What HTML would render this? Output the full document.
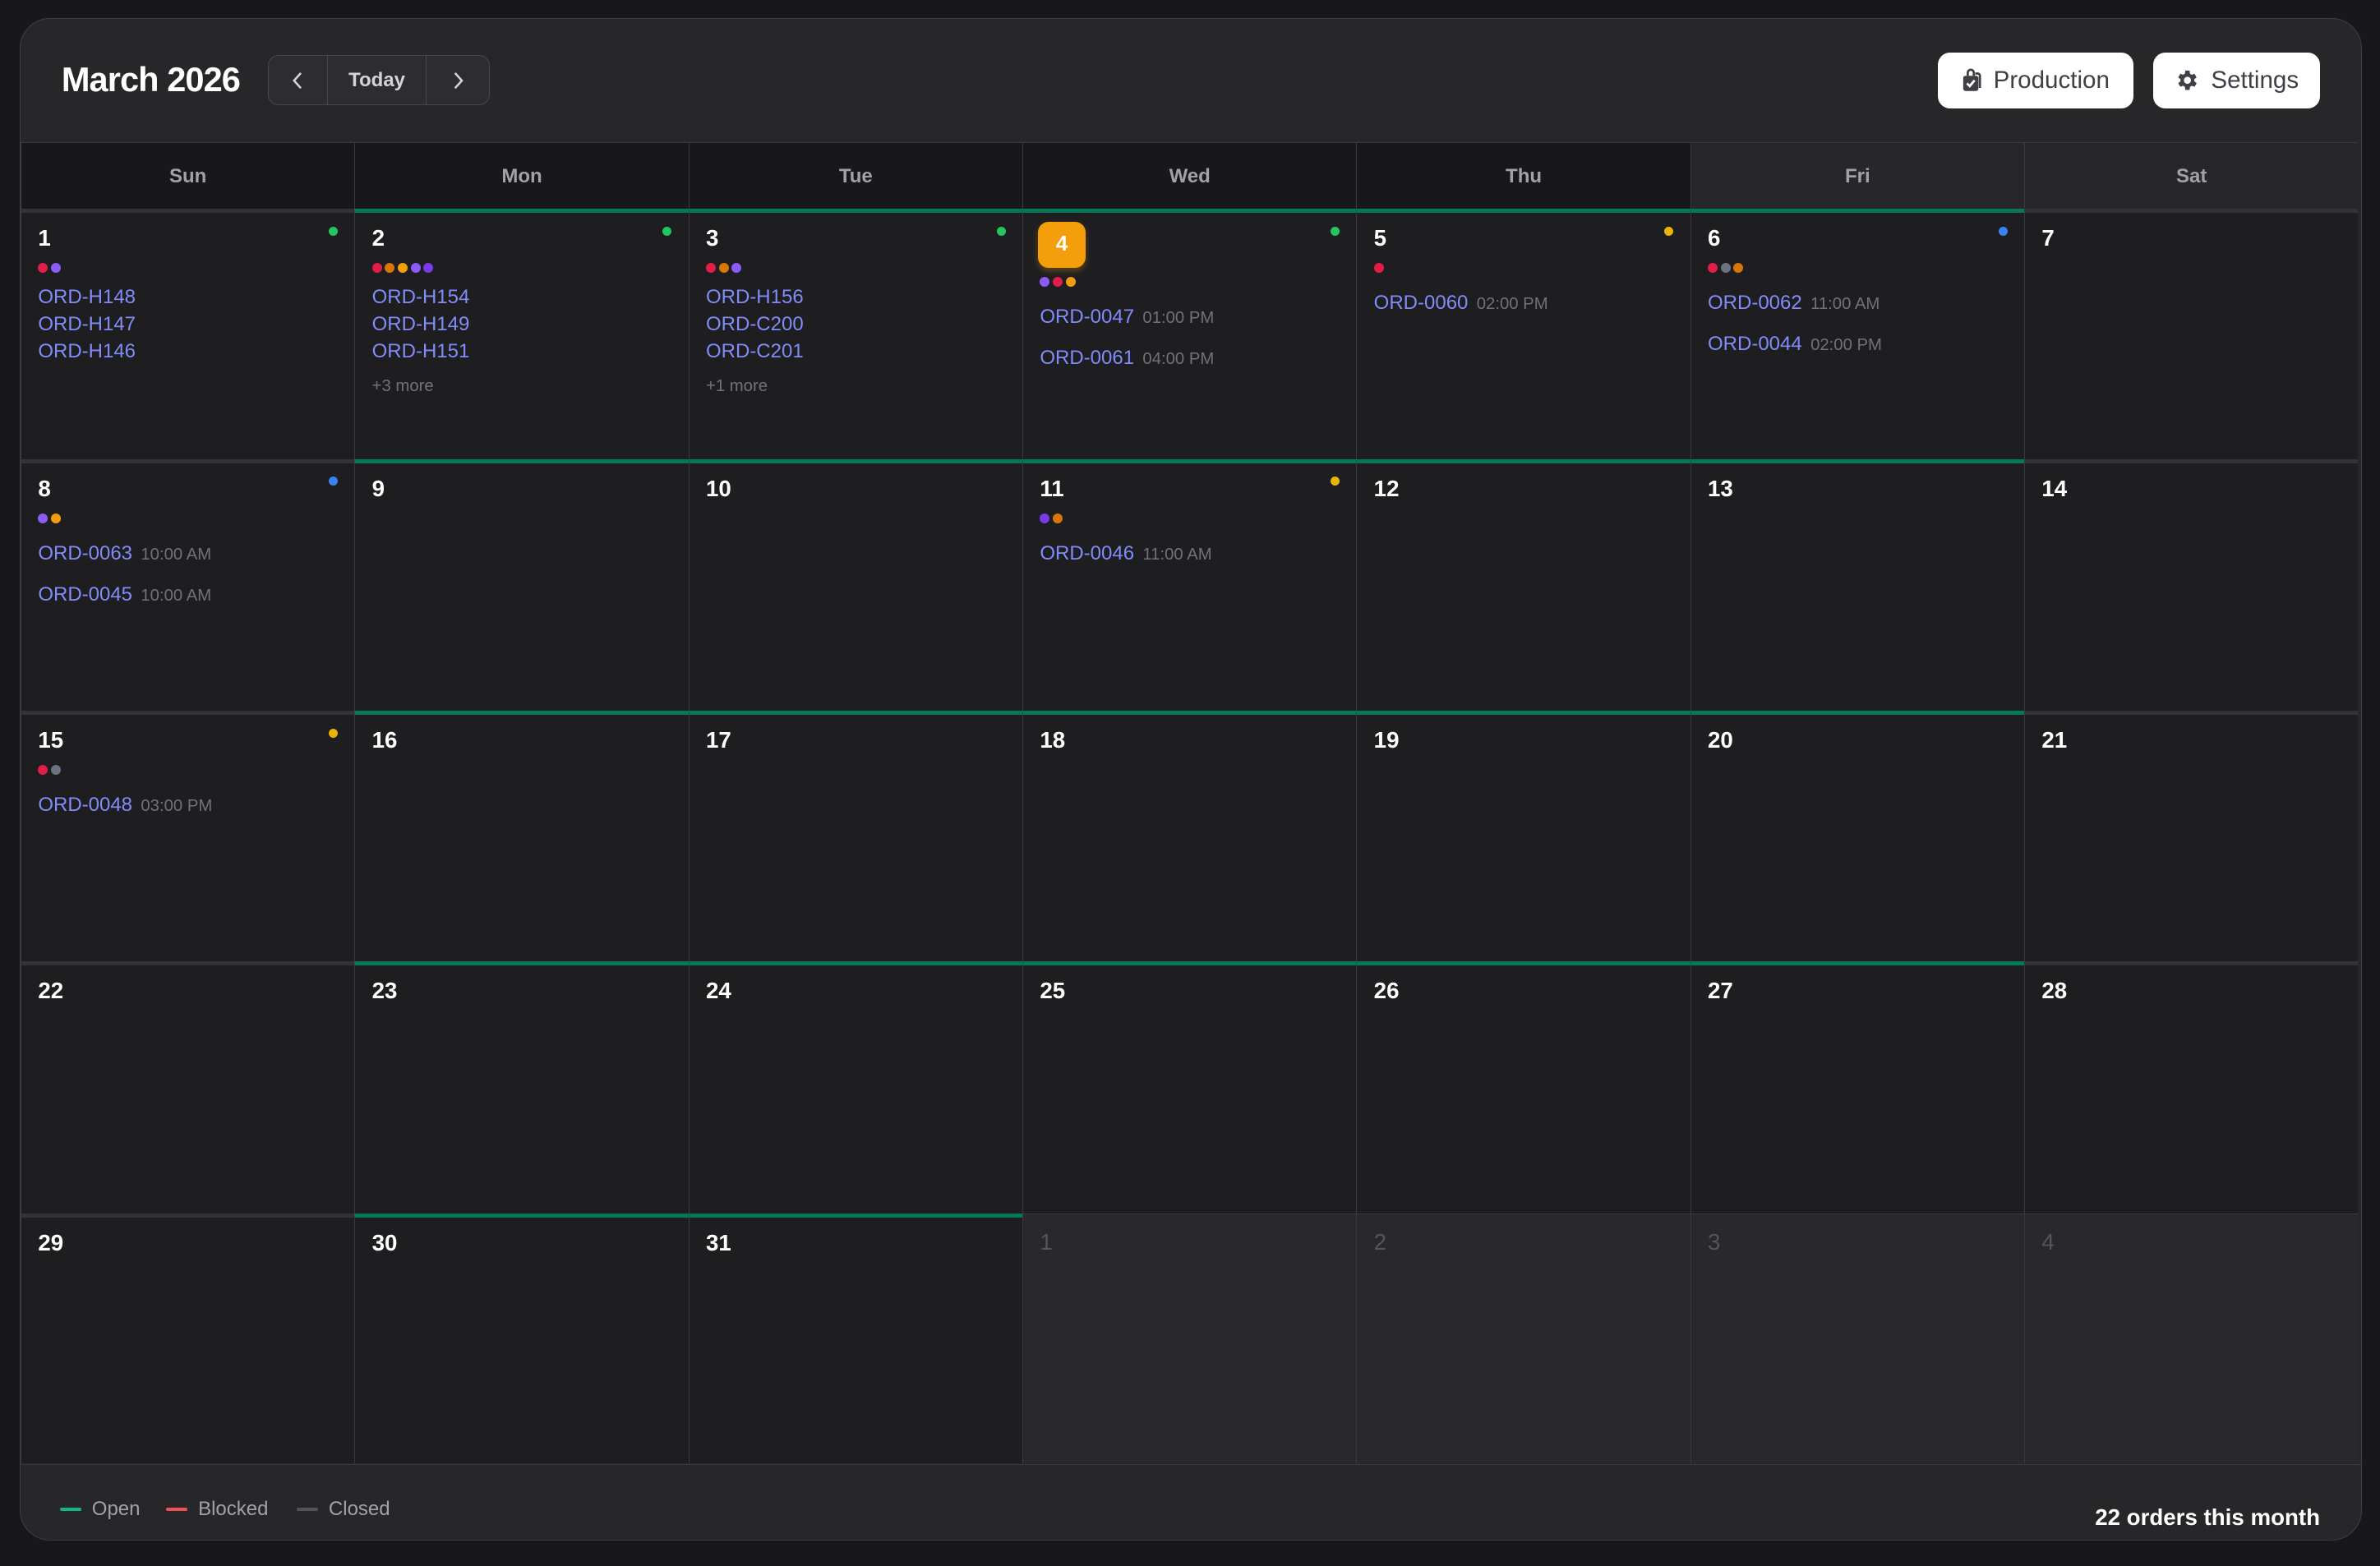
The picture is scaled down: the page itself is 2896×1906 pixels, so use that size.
<!DOCTYPE html>
<html><head><meta charset="utf-8"><style>
*{margin:0;padding:0;box-sizing:border-box}
html,body{width:2896px;height:1906px;background:#18181b;overflow:hidden}
#z{zoom:1.847;width:1568px;height:1032px;position:relative;font-family:"Liberation Sans",sans-serif}
.card{position:absolute;left:13px;top:12px;width:1543px;height:1003px;background:#27272a;border:1px solid #3f3f46;border-radius:20px;overflow:hidden}
.title{position:absolute;left:27px;top:27px;font-size:22.5px;font-weight:700;color:#fff;letter-spacing:-0.5px}
.nav{position:absolute;left:163px;top:24px;width:146px;height:33px;border:1px solid #46464c;border-radius:7px;background:#2d2d31;display:flex;color:#d4d4d8;font-size:13px;font-weight:600}
.nav div{display:flex;align-items:center;justify-content:center}
.btn{position:absolute;top:22px;height:37px;background:#fff;border-radius:8px;color:#3f3f46;font-size:16px;display:flex;align-items:center;gap:7px;justify-content:center}
.hd{position:absolute;top:81px;height:45px;width:220px;border-left:1px solid #3a3a3d;border-top:1px solid #3a3a3d;color:#a1a1aa;font-size:13px;font-weight:600;display:flex;align-items:center;justify-content:center;background:#18181b}
.c{position:absolute;width:220px;background:#1e1e21;border-left:1px solid #3a3a3d;border-top:3px solid #333336}
.g{border-top-color:#047857}
.n{background:#29292c;border-top:1px solid #3a3a3d}
.c .d{position:absolute;left:11px;top:8px;font-size:15px;font-weight:600;color:#fff}
.n .d{color:#55555a;font-weight:400;top:10px}
.c .s{position:absolute;right:11px;top:9px;width:6px;height:6px;border-radius:50%}
.dots{position:absolute;left:11px;top:33px;display:flex;gap:2px}
.dots i{width:6.5px;height:6.5px;border-radius:50%;display:block}
.o{position:absolute;left:11px;font-size:13px;color:#818cf8;white-space:nowrap}
.o span{font-size:11px;color:#71717a;margin-left:2px}
.more{position:absolute;left:11px;font-size:11px;color:#71717a}
.R{background:#e11d48}.D{background:#d97706}.O{background:#f59e0b}.P{background:#8b5cf6}.V{background:#7c3aed}.G{background:#6b7280}
.foot{position:absolute;top:952px;left:0;width:100%;height:51px;border-top:1px solid #3a3a3d}
.lg{position:absolute;top:22px;font-size:13px;color:#a1a1aa;display:flex;align-items:center;gap:7px}
.lg b{display:block;width:14px;height:2.5px;border-radius:2px}
</style></head><body><div id="z">
<div class="card">
<div class="title">March 2026</div>
<div class="nav"><div style="width:39px;border-right:1px solid #46464c"><svg width="8" height="12" viewBox="0 0 8 12"><path d="M6 1L1.5 6 6 11" stroke="#d4d4d8" stroke-width="1.4" fill="none"/></svg></div><div style="width:65px;border-right:1px solid #46464c">Today</div><div style="flex:1"><svg width="8" height="12" viewBox="0 0 8 12"><path d="M2 1l4.5 5L2 11" stroke="#d4d4d8" stroke-width="1.4" fill="none"/></svg></div></div>
<div class="btn" style="left:1263px;width:129px"><svg width="14" height="16" viewBox="0 0 14 16"><rect x="1" y="5" width="10" height="10" rx="1.5" fill="#3f3f46"/><path d="M4 5V3a2 2 0 0 1 4 0v2M9 3.5h1.5a1.5 1.5 0 0 1 1.5 1.5v8" stroke="#3f3f46" stroke-width="1.5" fill="none"/><path d="M3.5 10l1.8 1.8L8.5 8" stroke="#fff" stroke-width="1.5" fill="none"/></svg>Production</div>
<div class="btn" style="left:1405px;width:110px"><svg width="17" height="17" viewBox="0 0 24 24"><path fill="#3f3f46" fill-rule="evenodd" d="M19.4 13a7.5 7.5 0 0 0 0-2l2.1-1.6-2-3.5-2.5 1a7.6 7.6 0 0 0-1.7-1L15 3h-4l-.4 2.9a7.6 7.6 0 0 0-1.7 1l-2.5-1-2 3.5L6.6 11a7.5 7.5 0 0 0 0 2l-2.2 1.6 2 3.5 2.5-1a7.6 7.6 0 0 0 1.7 1L11 21h4l.4-2.9a7.6 7.6 0 0 0 1.7-1l2.5 1 2-3.5zM13 15.3a3.3 3.3 0 1 1 0-6.6 3.3 3.3 0 0 1 0 6.6z" transform="translate(-1 0)"/></svg>Settings</div>

<div class="hd" style="left:0">Sun</div><div class="hd" style="left:220px">Mon</div><div class="hd" style="left:440px">Tue</div><div class="hd" style="left:660px">Wed</div><div class="hd" style="left:880px">Thu</div><div class="hd" style="left:1100px;background:#27272a">Fri</div><div class="hd" style="left:1320px;background:#27272a">Sat</div>

<div class="c" style="left:0;top:125px;height:166px"><div class="d">1</div><div class="s" style="background:#22c55e"></div><div class="dots"><i class="R"></i><i class="P"></i></div><div class="o" style="top:48px">ORD-H148</div><div class="o" style="top:66px">ORD-H147</div><div class="o" style="top:84px">ORD-H146</div></div>
<div class="c g" style="left:220px;top:125px;height:166px"><div class="d">2</div><div class="s" style="background:#22c55e"></div><div class="dots"><i class="R"></i><i class="D"></i><i class="O"></i><i class="P"></i><i class="V"></i></div><div class="o" style="top:48px">ORD-H154</div><div class="o" style="top:66px">ORD-H149</div><div class="o" style="top:84px">ORD-H151</div><div class="more" style="top:108px">+3 more</div></div>
<div class="c g" style="left:440px;top:125px;height:166px"><div class="d">3</div><div class="s" style="background:#22c55e"></div><div class="dots"><i class="R"></i><i class="D"></i><i class="P"></i></div><div class="o" style="top:48px">ORD-H156</div><div class="o" style="top:66px">ORD-C200</div><div class="o" style="top:84px">ORD-C201</div><div class="more" style="top:108px">+1 more</div></div>
<div class="c g" style="left:660px;top:125px;height:166px"><div class="d" style="left:10px;top:6px;width:31px;height:30px;background:#f59e0b;border-radius:7px;display:flex;align-items:center;justify-content:center;font-size:14px;box-shadow:0 2px 4px rgba(245,158,11,.3)">4</div><div class="s" style="background:#22c55e"></div><div class="dots" style="top:42px"><i class="P"></i><i class="R"></i><i class="O"></i></div><div class="o" style="top:61px">ORD-0047 <span>01:00 PM</span></div><div class="o" style="top:88px">ORD-0061 <span>04:00 PM</span></div></div>
<div class="c g" style="left:880px;top:125px;height:166px"><div class="d">5</div><div class="s" style="background:#eab308"></div><div class="dots"><i class="R"></i></div><div class="o" style="top:52px">ORD-0060 <span>02:00 PM</span></div></div>
<div class="c g" style="left:1100px;top:125px;height:166px"><div class="d">6</div><div class="s" style="background:#3b82f6"></div><div class="dots"><i class="R"></i><i class="G"></i><i class="D"></i></div><div class="o" style="top:52px">ORD-0062 <span>11:00 AM</span></div><div class="o" style="top:79px">ORD-0044 <span>02:00 PM</span></div></div>
<div class="c" style="left:1320px;top:125px;height:166px"><div class="d">7</div></div>

<div class="c" style="left:0;top:290px;height:166px"><div class="d">8</div><div class="s" style="background:#3b82f6"></div><div class="dots"><i class="P"></i><i class="O"></i></div><div class="o" style="top:52px">ORD-0063 <span>10:00 AM</span></div><div class="o" style="top:79px">ORD-0045 <span>10:00 AM</span></div></div>
<div class="c g" style="left:220px;top:290px;height:166px"><div class="d">9</div></div>
<div class="c g" style="left:440px;top:290px;height:166px"><div class="d">10</div></div>
<div class="c g" style="left:660px;top:290px;height:166px"><div class="d">11</div><div class="s" style="background:#eab308"></div><div class="dots"><i class="V"></i><i class="D"></i></div><div class="o" style="top:52px">ORD-0046 <span>11:00 AM</span></div></div>
<div class="c g" style="left:880px;top:290px;height:166px"><div class="d">12</div></div>
<div class="c g" style="left:1100px;top:290px;height:166px"><div class="d">13</div></div>
<div class="c" style="left:1320px;top:290px;height:166px"><div class="d">14</div></div>

<div class="c" style="left:0;top:456px;height:166px"><div class="d">15</div><div class="s" style="background:#eab308"></div><div class="dots"><i class="R"></i><i class="G"></i></div><div class="o" style="top:52px">ORD-0048 <span>03:00 PM</span></div></div>
<div class="c g" style="left:220px;top:456px;height:166px"><div class="d">16</div></div>
<div class="c g" style="left:440px;top:456px;height:166px"><div class="d">17</div></div>
<div class="c g" style="left:660px;top:456px;height:166px"><div class="d">18</div></div>
<div class="c g" style="left:880px;top:456px;height:166px"><div class="d">19</div></div>
<div class="c g" style="left:1100px;top:456px;height:166px"><div class="d">20</div></div>
<div class="c" style="left:1320px;top:456px;height:166px"><div class="d">21</div></div>

<div class="c" style="left:0;top:621px;height:166px"><div class="d">22</div></div>
<div class="c g" style="left:220px;top:621px;height:166px"><div class="d">23</div></div>
<div class="c g" style="left:440px;top:621px;height:166px"><div class="d">24</div></div>
<div class="c g" style="left:660px;top:621px;height:166px"><div class="d">25</div></div>
<div class="c g" style="left:880px;top:621px;height:166px"><div class="d">26</div></div>
<div class="c g" style="left:1100px;top:621px;height:166px"><div class="d">27</div></div>
<div class="c" style="left:1320px;top:621px;height:166px"><div class="d">28</div></div>

<div class="c" style="left:0;top:787px;height:165px"><div class="d">29</div></div>
<div class="c g" style="left:220px;top:787px;height:165px"><div class="d">30</div></div>
<div class="c g" style="left:440px;top:787px;height:165px"><div class="d">31</div></div>
<div class="c n" style="left:660px;top:787px;height:165px"><div class="d">1</div></div>
<div class="c n" style="left:880px;top:787px;height:165px"><div class="d">2</div></div>
<div class="c n" style="left:1100px;top:787px;height:165px"><div class="d">3</div></div>
<div class="c n" style="left:1320px;top:787px;height:165px"><div class="d">4</div></div>

<div class="foot">
<div class="lg" style="left:26px"><b style="background:#10b981"></b>Open</div>
<div class="lg" style="left:96px"><b style="background:#f05252"></b>Blocked</div>
<div class="lg" style="left:182px"><b style="background:#52525b"></b>Closed</div>
<div style="position:absolute;right:27px;top:26px;font-size:15px;font-weight:700;color:#fff">22 orders this month</div>
</div>
</div>
</div></body></html>
